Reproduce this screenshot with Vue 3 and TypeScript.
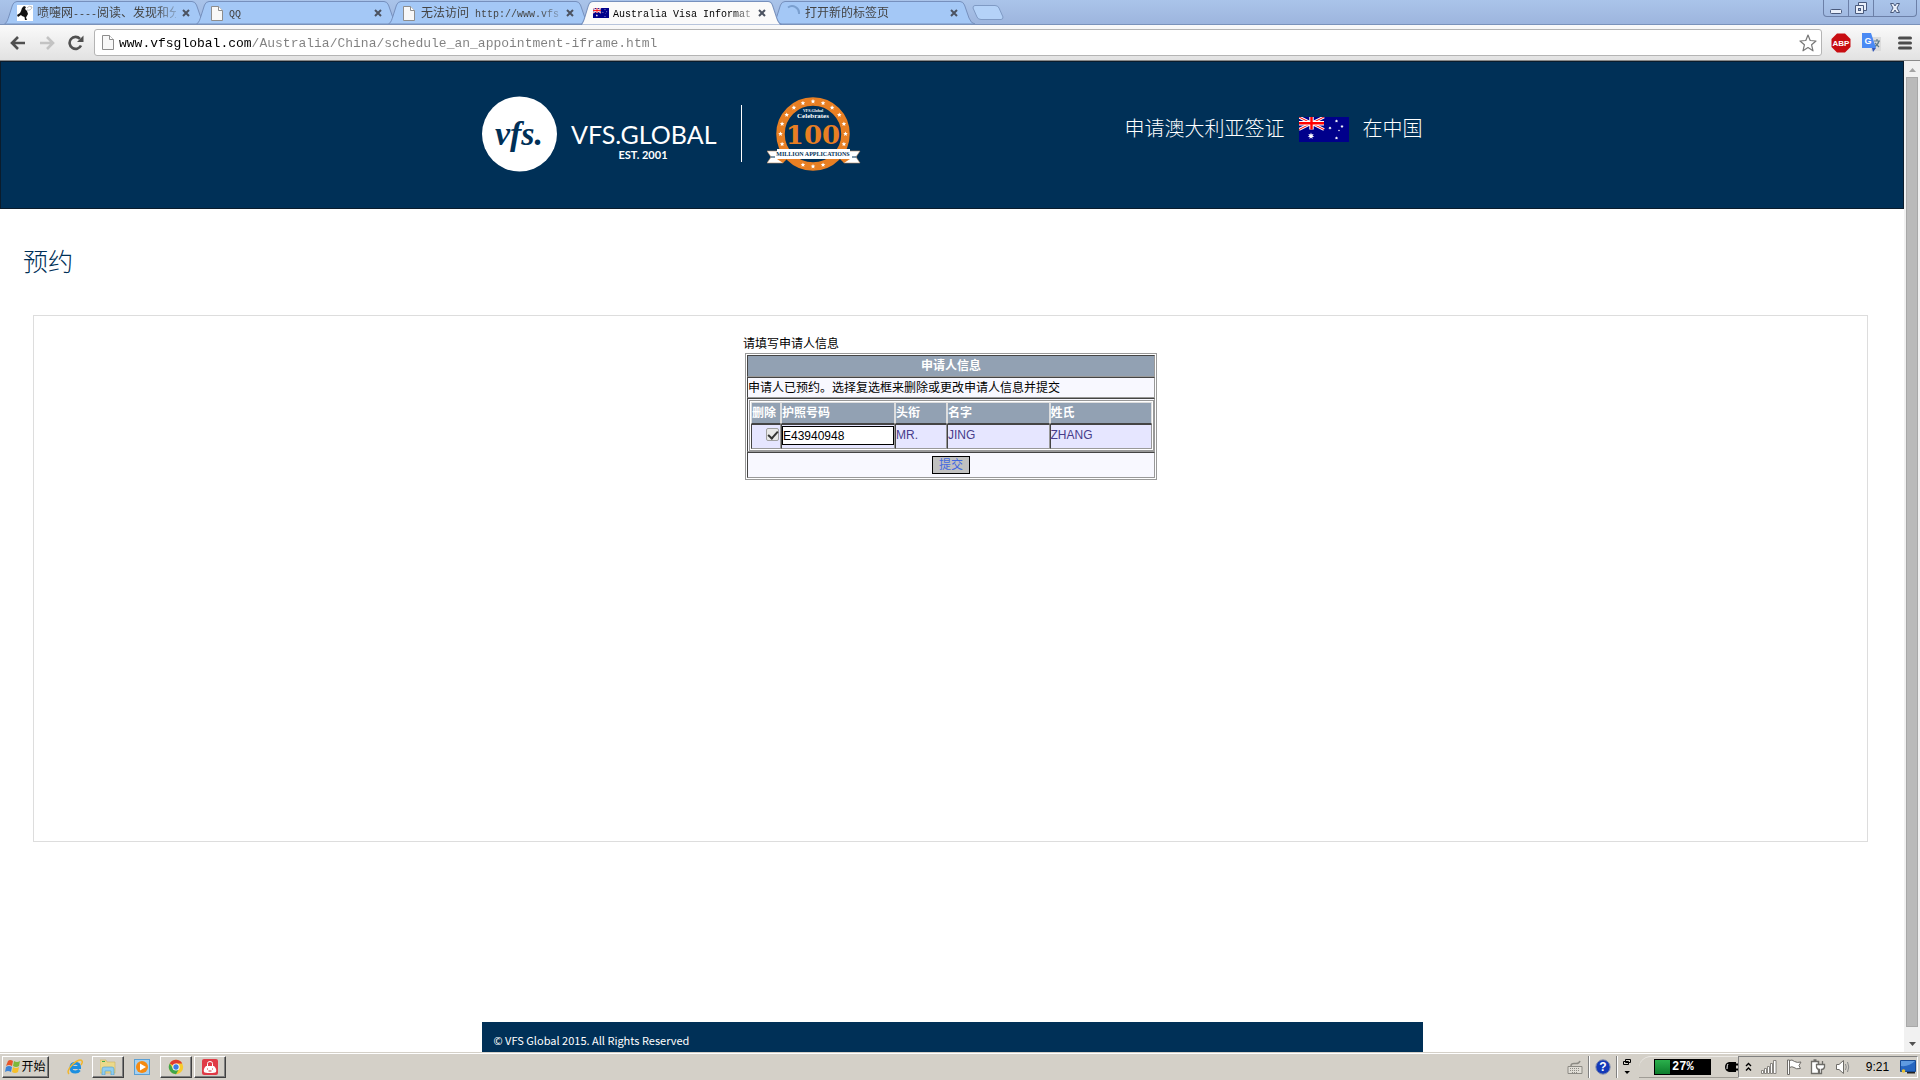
<script setup lang="ts">
import { ref } from 'vue'

interface Tab {
  icon: 'bird' | 'page' | 'flag' | 'spinner'
  cjk: string
  latin: string
  tail: string
  active: boolean
}

const tabs: Tab[] = [
  { icon: 'bird', cjk: '喷嚏网', latin: '----', tail: '阅读、发现和分', active: false },
  { icon: 'page', cjk: '', latin: 'QQ', tail: '', active: false },
  { icon: 'page', cjk: '无法访问', latin: ' http://www.vfs', tail: '', active: false },
  { icon: 'flag', cjk: '', latin: 'Australia Visa Informat', tail: '', active: true },
  { icon: 'spinner', cjk: '打开新的标签页', latin: '', tail: '', active: false },
]

const url = ref('www.vfsglobal.com/Australia/China/schedule_an_appointment-iframe.html')

const applicant = ref({ selected: true, passport: 'E43940948', title: 'MR.', first: 'JING', last: 'ZHANG' })

function star(cx: number, cy: number, outer: number, inner: number, points = 5): string {
  const out: string[] = []
  for (let i = 0; i < points * 2; i++) {
    const r = i % 2 === 0 ? outer : inner
    const a = (Math.PI * i) / points - Math.PI / 2
    out.push(`${(cx + r * Math.cos(a)).toFixed(2)},${(cy + r * Math.sin(a)).toFixed(2)}`)
  }
  return out.join(' ')
}

// stars round the badge ring, in degrees clockwise from the top
const badgeStars = [-108, -90, -72, -54, -36, -18, 0, 18, 36, 54, 72, 90, 108, 162, 180, 198].map((deg) => {
  const a = ((deg - 90) * Math.PI) / 180
  return star(46 + 32.5 * Math.cos(a), 38 + 32.5 * Math.sin(a), 2.4, 1.1)
})

const flagStars = [
  star(12, 19, 3.4, 1.6, 7),
  star(37.5, 4, 1.7, 0.8, 7),
  star(31, 11, 1.7, 0.8, 7),
  star(43, 9.5, 1.7, 0.8, 7),
  star(40, 13.5, 1, 0.5),
  star(37.5, 21, 1.7, 0.8, 7),
]
</script>

<template>
  <div class="desktop">
    <svg class="defs" width="0" height="0" aria-hidden="true">
      <symbol id="au-flag" viewBox="0 0 50 25">
        <rect width="50" height="25" fill="#00008b" />
        <path d="M0 0 25 12.5M25 0 0 12.5" stroke="#fff" stroke-width="3" />
        <path d="M0 0 25 12.5M25 0 0 12.5" stroke="#f00" stroke-width="1" />
        <path d="M12.5 0V12.5M0 6.25H25" stroke="#fff" stroke-width="4.4" />
        <path d="M12.5 0V12.5M0 6.25H25" stroke="#f00" stroke-width="2.4" />
        <polygon v-for="(p, i) in flagStars" :key="i" :points="p" fill="#fff" />
      </symbol>
      <symbol id="page-icon" viewBox="0 0 12 15">
        <path d="M.5.5H7.500L11.500 4.500V14.500H.5Z" fill="#f8f8f8" stroke="#8d8d8d" />
        <path d="M7.500.5V4.500H11.500" fill="#fff" stroke="#8d8d8d" />
      </symbol>
    </svg>

    <!-- browser window -->
    <div class="strip">
      <div class="tabs" role="tablist">
        <div v-for="(tab, i) in tabs" :key="i" class="tab" :class="{ active: tab.active }" role="tab">
          <svg class="tab-shape" viewBox="0 0 204 24" preserveAspectRatio="none">
            <path d="M.5 24C3 23 4 19 5 16L8.500 5Q10 1.500 13 1.500H188Q191 1.500 192.500 5L197 18Q199 23.500 203 24Z" />
          </svg>
          <div class="tab-body">
            <span class="favicon">
              <svg v-if="tab.icon === 'bird'" width="16" height="16" viewBox="0 0 16 16">
                <rect width="16" height="16" fill="#fff" />
                <path d="M5 3 7 1 9 2 8 4 10 6 11 9 9 12.500 10 15H8L7.500 12 5 11 4 10 1 12 0 10 3 8 4 6Z" fill="#111" />
                <path d="M10 3Q12 0 15 2 14 6 10 5" stroke="#bbb" fill="none" />
              </svg>
              <svg v-else-if="tab.icon === 'page'" width="12" height="15"><use href="#page-icon" /></svg>
              <svg v-else-if="tab.icon === 'flag'" width="16" height="10" viewBox="0 0 50 25" preserveAspectRatio="none"><use href="#au-flag" width="50" height="25" /></svg>
              <svg v-else width="16" height="16" viewBox="0 0 16 16"><path d="M3 2.500A7 7 0 0 1 14 9" fill="none" stroke="#7a9fcf" stroke-width="2" /></svg>
            </span>
            <span class="tab-title">{{ tab.cjk }}<span class="latin">{{ tab.latin }}</span>{{ tab.tail }}</span>
            <button class="tab-close" type="button" aria-label="关闭标签页">
              <svg width="8" height="8" viewBox="0 0 8 8"><path d="M1 1 7 7M7 1 1 7" stroke="#4b5260" stroke-width="2" /></svg>
            </button>
          </div>
        </div>
        <button class="new-tab" type="button" aria-label="新标签页">
          <svg width="32" height="17" viewBox="0 0 32 17"><path d="M3 1.500H23Q26 1.500 27 4L31 13Q31 15.500 29 15.500H9Q6 15.500 5 13L1 4Q1 1.500 3 1.500Z" fill="#b4d2f8" stroke="#7f9ac4" /></svg>
        </button>
      </div>
      <div class="window-buttons">
        <button type="button" aria-label="最小化"><svg width="14" height="14" viewBox="0 0 14 14"><rect x="1.500" y="8.500" width="11" height="4" rx="1" fill="#e9effa" stroke="#4a5a7c" /></svg></button>
        <button type="button" aria-label="还原"><svg width="14" height="14" viewBox="0 0 14 14"><path d="M4.500 1.500H12.500V9.500H4.500Z" fill="#e9effa" stroke="#4a5a7c" /><path d="M1.500 4.500H9.500V12.500H1.500Z" fill="#e9effa" stroke="#4a5a7c" /><rect x="4.500" y="7.500" width="2" height="2" fill="#a5bde4" stroke="#4a5a7c" /></svg></button>
        <button class="wide" type="button" aria-label="关闭"><svg width="14" height="14" viewBox="0 0 14 14"><path d="M2.500 2.500H5.500L7 5 8.500 2.500H11.500L9 7 11.500 11.500H8.500L7 9 5.500 11.500H2.500L5 7Z" fill="#e9effa" stroke="#4a5a7c" /></svg></button>
      </div>
    </div>

    <div class="toolbar">
      <button class="tool" type="button" aria-label="后退"><svg width="16" height="16" viewBox="0 0 16 16"><path d="M15 8H2M8 2 2 8 8 14" fill="none" stroke="#505050" stroke-width="2.600" /></svg></button>
      <button class="tool" type="button" aria-label="前进"><svg width="16" height="16" viewBox="0 0 16 16"><path d="M1 8H14M8 2 14 8 8 14" fill="none" stroke="#c3c3c3" stroke-width="2.600" /></svg></button>
      <button class="tool" type="button" aria-label="重新加载"><svg width="16" height="16" viewBox="0 0 16 16"><path d="M13 10.500A6 6 0 1 1 12 3.800" fill="none" stroke="#505050" stroke-width="2.600" /><path d="M15.500.5V7H9Z" fill="#505050" /></svg></button>
      <div class="omnibox">
        <svg width="12" height="15"><use href="#page-icon" /></svg>
        <input v-model="url" class="url" type="text" aria-label="地址栏" spellcheck="false" />
        <svg width="18" height="18" viewBox="0 0 18 18"><path d="M9 1 11.200 6.500 17 7 12.600 10.800 14 16.800 9 13.600 4 16.800 5.400 10.800 1 7 6.800 6.500Z" fill="#fff" stroke="#777" stroke-width="1.200" stroke-linejoin="round" /></svg>
      </div>
      <button class="ext" type="button" aria-label="Adblock Plus">
        <svg width="20" height="20" viewBox="0 0 20 20"><path d="M6 .5H14L19.500 6V14L14 19.500H6L.5 14V6Z" fill="#c80d12" /><text x="10" y="13" text-anchor="middle" class="abp-text">ABP</text></svg>
      </button>
      <button class="ext" type="button" aria-label="翻译">
        <svg width="20" height="20" viewBox="0 0 20 20"><rect x="9" y="4" width="10" height="14" fill="#dcdcdc" /><path d="M12 8H18M15 6V8M17 8Q16 12 12 14M13 10 17 14" stroke="#607d8b" stroke-width="1.200" fill="none" /><path d="M0 0H9L14 15H0Z" fill="#4a8af4" /><path d="M10 15H14L11 19Z" fill="#3257b8" /><text x="6" y="11" text-anchor="middle" class="g-text">G</text></svg>
      </button>
      <button class="ext menu" type="button" aria-label="菜单">
        <svg width="14" height="14" viewBox="0 0 14 14"><path d="M1.500 2H12.500M1.500 7H12.500M1.500 12H12.500" stroke="#4d4d4d" stroke-width="3" stroke-linecap="round" /></svg>
      </button>
    </div>

    <div class="viewport">
      <div class="page">
        <header class="site-header">
          <div class="site-inner">
            <svg class="logo" width="262" height="76" viewBox="0 0 262 76" role="img" aria-label="VFS Global">
              <circle cx="37.500" cy="38" r="37.500" fill="#fff" />
              <text x="37" y="49" text-anchor="middle" class="logo-script">vfs.</text>
              <text x="89" y="48" class="logo-name">VFS.GLOBAL</text>
              <text x="161" y="63" text-anchor="middle" class="logo-est">EST. 2001</text>
              <rect x="259" y="9" width="1" height="57" fill="#fff" />
            </svg>
            <svg class="badge" width="94" height="76" viewBox="0 0 94 76" role="img" aria-label="100 Million Applications">
              <circle cx="46" cy="38" r="32.500" fill="#003057" stroke="#e87f23" stroke-width="8.500" />
              <polygon v-for="(p, i) in badgeStars" :key="i" :points="p" fill="#fff" />
              <text x="46" y="16" text-anchor="middle" class="badge-tiny">VFS.Global</text>
              <text x="46" y="22" text-anchor="middle" class="badge-small">Celebrates</text>
              <text x="46" y="48" text-anchor="middle" class="badge-big">100</text>
              <path d="M0 55H16V67H0L4 61ZM93 55H77V67H93L89 61Z" fill="#fff" stroke="#b98a62" stroke-width=".6" />
              <rect x="10" y="53" width="73" height="10" fill="#fff" />
              <path d="M10 63H20L16 67ZM83 63H73L77 67Z" fill="#e87f23" />
              <path d="M4 61H8M85 61H89" stroke="#003057" />
              <text x="46" y="60" text-anchor="middle" class="badge-band">MILLION APPLICATIONS</text>
            </svg>
            <div class="country">
              <span>申请澳大利亚签证</span>
              <svg width="50" height="25" role="img" aria-label="澳大利亚"><use href="#au-flag" /></svg>
              <span>在中国</span>
            </div>
          </div>
        </header>

        <h1 class="title">预约</h1>

        <main class="frame">
          <form class="form" @submit.prevent>
            <p class="lead">请填写申请人信息</p>
            <table class="outer">
              <thead>
                <tr class="r-head"><th>申请人信息</th></tr>
              </thead>
              <tbody>
                <tr class="r-note"><td>申请人已预约。选择复选框来删除或更改申请人信息并提交</td></tr>
                <tr class="r-list">
                  <td>
                    <table class="inner">
                      <colgroup><col class="c1" /><col class="c2" /><col class="c3" /><col class="c4" /><col class="c4" /></colgroup>
                      <thead>
                        <tr><th>删除</th><th>护照号码</th><th>头衔</th><th>名字</th><th>姓氏</th></tr>
                      </thead>
                      <tbody>
                        <tr>
                          <td class="pick"><input v-model="applicant.selected" class="check" type="checkbox" aria-label="删除" /></td>
                          <td class="edit"><input v-model="applicant.passport" class="passport" type="text" aria-label="护照号码" /></td>
                          <td>{{ applicant.title }}</td>
                          <td>{{ applicant.first }}</td>
                          <td>{{ applicant.last }}</td>
                        </tr>
                      </tbody>
                    </table>
                  </td>
                </tr>
                <tr class="r-submit"><td><button class="submit" type="submit">提交</button></td></tr>
              </tbody>
            </table>
          </form>
        </main>

        <footer class="site-footer">© VFS Global 2015. All Rights Reserved</footer>
      </div>
      <div class="scrollbar">
        <svg width="16" height="16" viewBox="0 0 16 16"><path d="M5 11H12L8.500 7Z" fill="#a3a3a3" /></svg>
        <div class="thumb"></div>
        <svg width="16" height="16" viewBox="0 0 16 16"><path d="M5 6H12L8.500 10Z" fill="#505050" /></svg>
      </div>
    </div>

    <!-- system taskbar -->
    <div class="taskbar">
      <button class="task start" type="button">
        <svg width="16" height="16" viewBox="0 0 16 16"><path d="M3 2Q5 0 8 2L7 7Q4 5 1 7Z" fill="#e8562a" /><path d="M9 2Q12 4 15 2L14 7Q11 9 8 7Z" fill="#7db83a" /><path d="M1 8Q4 6 7 8L6 13Q3 11 0 13Z" fill="#3c84d8" /><path d="M8 8Q11 10 14 8L13 13Q10 15 7 13Z" fill="#f6bf2a" /></svg>
        <span>开始</span>
      </button>
      <button class="flat" type="button" aria-label="Internet Explorer">
        <svg width="16" height="16" viewBox="0 0 16 16"><path d="M3.500 8.500H12.500Q12.500 4.200 8.500 4.200 4 4.200 4 9 4 13 8.500 13 11 13 12.500 11" fill="none" stroke="#1c8fe0" stroke-width="3" /><path d="M2 15Q-1 12 6 5 13-1 15 2 16 3 14 6" fill="none" stroke="#f2b62b" stroke-width="1.500" /></svg>
      </button>
      <button class="task app" type="button" aria-label="资源管理器">
        <svg width="16" height="16" viewBox="0 0 16 16"><path d="M0 3V1H6L7 3H15V14H0Z" fill="#ecd98a" stroke="#cdb45c" stroke-width=".6" /><rect x="2" y="2" width="3" height="1" fill="#3eae49" /><path d="M2 16V10Q2 8 4 8H12Q14 8 14 10V16H11V12H5V16Z" fill="#8fcdee" stroke="#4e9ccb" stroke-width=".6" /></svg>
      </button>
      <button class="flat" type="button" aria-label="媒体播放器">
        <svg width="16" height="16" viewBox="0 0 16 16"><rect x=".5" y=".5" width="15" height="15" fill="#a6d0f0" stroke="#5a9fd4" /><circle cx="8" cy="8" r="6" fill="#f58a12" /><path d="M6 4.500 12 8 6 11.500Z" fill="#fff" /></svg>
      </button>
      <button class="task app chrome" type="button" aria-label="Chrome">
        <svg width="16" height="16" viewBox="0 0 16 16"><circle cx="8" cy="8" r="7.200" fill="#f7cb2d" /><path d="M8 8 1.760 4.400A7.200 7.200 0 0 1 14.240 4.400H8Z" fill="#df3c2f" /><path d="M1.760 4.400A7.200 7.200 0 0 0 8 15.200L11 10 8 8 5 9.500Z" fill="#3fa649" /><circle cx="8" cy="8" r="3.600" fill="#fff" /><circle cx="8" cy="8" r="2.700" fill="#3b7de0" /></svg>
      </button>
      <button class="task app" type="button" aria-label="应用">
        <svg width="16" height="16" viewBox="0 0 16 16"><rect width="16" height="16" rx="2" fill="#e03a45" /><path d="M5.500 8V4.500Q5.500 2.500 8 2.500T10.500 4.500V8" fill="none" stroke="#fff" /><path d="M4 7H12Q15 10 14 13 13 14 8 14T2 13Q1 10 4 7Z" fill="#fff" /><path d="M5.500 9.500V10.500M10.500 9.500V10.500M6.500 12H9.500" stroke="#d0303a" /></svg>
      </button>

      <div class="tools">
        <svg width="16" height="16" viewBox="0 0 16 16"><path d="M1 7.500H15V14.500H1Z" fill="#e0ddd6" stroke="#8c8a84" /><path d="M3 9.500H13M3 11.500H13M5 13.500H11" stroke="#8c8a84" stroke-dasharray="1 1" /><path d="M4 7Q4 4 8 4.500T13 2" fill="none" stroke="#8c8a84" stroke-width="1.500" /></svg>
        <i class="sep"></i>
        <svg width="16" height="16" viewBox="0 0 16 16"><circle cx="8" cy="8" r="7.200" fill="#1439b8" stroke="#8791ad" /><text x="8" y="12" text-anchor="middle" class="help-text">?</text></svg>
        <i class="sep"></i>
        <svg width="8" height="18" viewBox="0 0 8 18"><path d="M2.500 1.500H7.500V4.500H2.500ZM.5 3.500H5.500V6.500H.5Z" fill="none" stroke="#000" /><path d="M1.500 13H7L4 16Z" /></svg>
      </div>
      <div class="power">
        <div class="battery"><span class="charge"></span><b>27%</b></div>
        <svg width="14" height="12" viewBox="0 0 14 12"><path d="M5 1H12V11H5Q1 10 1 6T5 1Z" fill="#000" /><path d="M12 3.500H14M12 8.500H14" stroke="#000" stroke-width="2" /><path d="M4 3Q3 4 3 8" fill="none" stroke="#fff" /></svg>
      </div>
      <div class="tray">
        <svg width="7" height="10" viewBox="0 0 7 10"><path d="M1 4 3.500 1.500 6 4M1 8.500 3.500 6 6 8.500" fill="none" stroke="#000" stroke-width="1.400" /></svg>
        <svg width="16" height="14" viewBox="0 0 16 14"><path d="M.5 10.500H2.500V13.500H.5ZM3.500 8.500H5.500V13.500H3.500ZM6.500 6.500H8.500V13.500H6.500ZM9.500 3.500H11.500V13.500H9.500ZM12.500.5H15V13.500H12.500Z" fill="#fff" stroke="#6e6c68" stroke-width=".8" /></svg>
        <svg width="16" height="16" viewBox="0 0 16 16"><path d="M1.500 1V15.500H3.500V1ZM3.500 1.500Q6 0 8.500 2.500 11 4 15 3L13 6.500 14.500 9.500Q10 10.500 8 8.500 6 7 3.500 8.500Z" fill="#fff" stroke="#6e6c68" /></svg>
        <svg width="16" height="16" viewBox="0 0 16 16"><path d="M1.500 2.500H8.500V14.500H1.500ZM3.500 1H6.500" fill="#fff" stroke="#6e6c68" stroke-width="1.300" /><path d="M6.500 5.500H14.500V8Q14 10.500 11.500 10.500V14.500H9.500V10.500Q7 10.500 6.500 8ZM8.500 2V5M12.500 2V5" fill="#fff" stroke="#6e6c68" stroke-width="1.300" /></svg>
        <svg width="16" height="16" viewBox="0 0 16 16"><path d="M1.500 5.500H4L8.500 1.500V14.500L4 10.500H1.500Z" fill="#fff" stroke="#6e6c68" /><path d="M10.500 5Q12 8 10.500 11M12.500 3Q15 8 12.500 13" fill="none" stroke="#888" /></svg>
        <span class="clock">9:21</span>
        <svg width="16" height="14" viewBox="0 0 16 14"><path d="M.5.5H15.500V11.500H.5Z" fill="#2666c0" stroke="#174a94" /><path d="M1 1H15Q9 7 1 6Z" fill="#5f9be0" /><path d="M7 12H15V13.500H7Z" fill="#222" /><circle cx="3.500" cy="11" r="1.800" fill="#e7c12f" /></svg>
      </div>
    </div>
  </div>
</template>

<style>
body {
  margin: 0;
}
</style>

<style scoped>
.desktop {
  height: 100vh;
  display: flex;
  flex-direction: column;
  overflow: hidden;
  background: #fff;
  color: #000;
  font: 12px/16px "Liberation Sans", "Noto Sans CJK SC", sans-serif;
}
.desktop *, .desktop { box-sizing: border-box; }
.defs { position: absolute; }
svg { display: block; flex: none; }
button {
  border: 0;
  padding: 0;
  background: none;
  font: inherit;
  color: inherit;
}

/* tab strip */
.strip {
  flex: none;
  height: 25px;
  display: flex;
  justify-content: space-between;
  align-items: flex-start;
  background: linear-gradient(#aac4ea, #9db5de);
  border-bottom: 1px solid #7a92ba;
}
.tabs { display: flex; padding-left: 4px; min-width: 0; }
.tab {
  display: grid;
  grid-template-columns: minmax(0, 1fr);
  flex: none;
  width: 204px;
  height: 24px;
  margin-right: -12px;
}
.tab-shape, .tab-body { grid-area: 1 / 1; }
.tab-shape { width: 100%; height: 24px; }
.tab-shape path { fill: #a4c8f6; stroke: #7690bd; }
.tab.active { height: 25px; z-index: 1; }
.tab.active .tab-shape { height: 25px; }
.tab.active .tab-shape path { fill: #fafafa; }
.tab-body {
  z-index: 1;
  display: flex;
  align-items: center;
  height: 24px;
  padding: 2px 18px 0 13px;
  color: #444;
}
.tab.active .tab-body { color: #000; }
.favicon { width: 16px; display: flex; justify-content: center; margin-right: 4px; }
.tab-title {
  flex: 1;
  min-width: 0;
  white-space: pre;
  font: 12px/20px "Noto Sans CJK SC", sans-serif;
  mask-image: linear-gradient(to right, #000 calc(100% - 20px), rgb(0 0 0 / 25%));
}
.latin { font: 10px/20px "Liberation Mono", monospace; }
.tab-close { width: 8px; height: 8px; margin-left: 6px; }
.new-tab { margin: 4px 0 0 8px; height: 17px; }
.window-buttons {
  display: flex;
  margin-right: 3px;
  border: 1px solid #6c80a8;
  border-top: 0;
  border-radius: 0 0 4px 4px;
}
.window-buttons button {
  width: 25px;
  height: 16px;
  display: grid;
  place-items: center;
  border-right: 1px solid #6c80a8;
}
.window-buttons .wide { width: 42px; border-right: 0; }

/* toolbar */
.toolbar {
  flex: none;
  height: 36px;
  display: flex;
  align-items: center;
  padding: 0 8px 0 10px;
  background: linear-gradient(#fafafa, #e2e2e2);
  border-bottom: 1px solid #8a8a8a;
}
.tool { width: 16px; height: 16px; margin-right: 13px; }
.omnibox {
  flex: 1;
  height: 27px;
  display: flex;
  align-items: center;
  margin: 0 9px 0 -3px;
  padding: 0 4px 0 7px;
  background: #fff;
  border: 1px solid #b4b4b4;
  border-radius: 3px;
}
.url {
  flex: 1;
  min-width: 0;
  height: 24px;
  margin: 0 0 0 5px;
  padding: 2px 0 0;
  border: 0;
  outline: 0;
  font: 13px/22px "Liberation Mono", monospace;
  color: transparent;
  background: linear-gradient(to right, #000 17ch, #808080 17ch);
  background-clip: text;
}
.ext { width: 20px; height: 20px; margin-right: 11px; }
.ext.menu { width: 14px; height: 14px; margin: 0 0 0 5px; }
.abp-text { font: bold 8px "Liberation Sans", sans-serif; fill: #fff; }
.g-text { font: bold 9px "Liberation Sans", sans-serif; fill: #fff; }
.help-text { font: bold 12px "Liberation Sans", sans-serif; fill: #fff; }

/* page */
.viewport { flex: 1; min-height: 0; display: flex; }
.page { flex: 1; min-width: 0; display: flex; flex-direction: column; }
.site-header {
  flex: none;
  padding: 34px 0 36px;
  background: #003057;
  border: 1px solid #0b1c2c;
}
.site-inner {
  width: 100%;
  max-width: 941px;
  margin: 0 auto;
  display: flex;
  align-items: flex-start;
}
.badge { margin-left: 23px; }
.country {
  margin: 17px 0 0 auto;
  display: flex;
  align-items: center;
  gap: 14px;
  color: #fff;
  font: 300 20px/30px "Noto Sans CJK SC", sans-serif;
}
.country svg { margin-top: 2px; }
.logo-script { font: italic bold 34px "Liberation Serif", serif; fill: #003057; }
.logo-name { font: 25px Lato, sans-serif; fill: #fff; }
.logo-est { font: bold 11px Lato, sans-serif; fill: #fff; }
.badge-tiny { font: bold 4px "Liberation Serif", serif; fill: #fff; }
.badge-small { font: bold 7px "Liberation Serif", serif; fill: #fff; }
.badge-big { font: bold 26px "DejaVu Serif", serif; fill: #e87f23; }
.badge-band { font: bold 6px "Liberation Serif", serif; fill: #003057; }

.title {
  margin: 31px 0 0 23px;
  font: 300 25px/40px "Noto Sans CJK SC", sans-serif;
  color: #003057;
}
.frame {
  flex: none;
  min-height: 527px;
  margin: 35px 36px 0 33px;
  padding: 18px 0;
  border: 1px solid #ddd;
}
.form { width: 415px; margin: 0 auto; }
.lead { margin: 0; padding-top: 1px; line-height: 18px; }
.outer, .inner {
  border-collapse: separate;
  border-spacing: 0;
  background: #fff;
}
.outer { width: 412px; margin-left: 2px; border: 1px solid #999; padding: 1px; }
.outer th, .outer td {
  padding: 0;
  border: 1px solid;
  border-color: #444 #999 #999 #444;
  text-align: left;
  line-height: 16px;
}
.outer th { background: #92a1b3; color: #fff; font-weight: bold; }
.outer td { background: #f8f8ff; }
.outer .r-head > th { text-align: center; height: 22px; }
.r-note > td { height: 21px; }
.outer .r-list > td { height: 54px; padding: 1px 0 0 1px; }
.outer .r-submit > td { height: 26px; }
.inner { width: 100%; border: 1px solid #999; padding: 1px; table-layout: fixed; }
.c1 { width: 30px; }
.c2 { width: 114px; }
.c3 { width: 52px; }
.inner th { height: 22px; border-color: #ddd #ddd #444 #ddd; }
.inner th, .inner td { white-space: nowrap; }
.inner td { height: 25px; background: #e6e6ff; color: #483d8b; vertical-align: top; padding-top: 2px; }
.inner .pick { padding-top: 0; text-align: right; }
.inner .edit { padding-top: 1px; }
.check {
  appearance: none;
  width: 13px;
  height: 13px;
  margin: 3px 1px 0 0;
  border: 1px solid #a0a0a0;
  border-radius: 2px;
  background: #e8e8e8;
  display: inline-grid;
  place-items: center;
}
.check:checked::before {
  content: "";
  width: 8px;
  height: 4px;
  border: solid #333;
  border-width: 0 0 2px 2px;
  transform: translateY(-1px) rotate(-48deg);
}
.passport {
  display: block;
  width: 112px;
  height: 19px;
  padding: 0;
  border: 1px solid #000;
  background: #fff;
  color: #000;
  font: 12px/16px "Liberation Sans", sans-serif;
}
.submit {
  display: block;
  width: 38px;
  height: 18px;
  margin: 0 auto;
  border: 1px solid #000;
  background: #c0c0c0;
  color: #4169e1;
  line-height: 16px;
}
.site-footer {
  width: 100%;
  max-width: 941px;
  height: 30px;
  margin: auto auto 0;
  padding: 0 12px;
  background: #003057;
  color: #fff;
  font: 11px/36px "Noto Sans CJK SC", sans-serif;
}
.scrollbar {
  flex: none;
  width: 16px;
  display: flex;
  flex-direction: column;
  background: #f1f1f1;
}
.thumb {
  flex: 1;
  margin: 0 2px 9px;
  background: #bababa;
  border: 1px solid #a8a8a8;
}

/* taskbar */
.taskbar {
  flex: none;
  height: 28px;
  display: flex;
  align-items: center;
  padding: 3px 2px 2px;
  background: #d4d0c8;
  border-top: 1px solid #d4d0c8;
  box-shadow: inset 0 1px #fff;
}
.task {
  height: 22px;
  display: flex;
  align-items: center;
  justify-content: center;
  border: 1px solid;
  border-color: #fff #404040 #404040 #fff;
  box-shadow: inset -1px -1px #808080;
}
.start { width: 47px; margin-right: 18px; }
.app { width: 32px; margin: 0 10px 0 9px; }
.chrome { margin: 0 -7px 0 10px; }
.flat { width: 16px; height: 16px; }
.tools { margin-left: auto; display: flex; align-items: center; gap: 5px; }
.sep { width: 2px; height: 22px; background: #808080; border-right: 1px solid #fff; }
.power {
  width: 99px;
  height: 22px;
  margin-left: 8px;
  padding: 0 0 0 15px;
  display: flex;
  align-items: center;
  justify-content: space-between;
  border-top: 1px solid #eceae6;
  border-bottom: 1px solid #a09d96;
  border-radius: 12px 0 0 0;
}
.battery {
  display: flex;
  align-items: center;
  width: 57px;
  height: 16px;
  background: #000;
  border: 1px solid #000;
  border-right-width: 2px;
  color: #fff;
}
.battery b { font: bold 12px/14px "Liberation Mono", monospace; margin-left: 2px; }
.charge { width: 15px; height: 14px; background: linear-gradient(#2bb04c, #0d7d2c); }
.tray {
  width: 180px;
  height: 22px;
  padding: 0 1px 0 6px;
  display: flex;
  align-items: center;
  justify-content: space-between;
  border: 1px solid;
  border-color: #808080 #fff #fff #808080;
}
.clock { font: 12px/16px "Liberation Sans", sans-serif; margin: 0 2px 0 6px; }
</style>
